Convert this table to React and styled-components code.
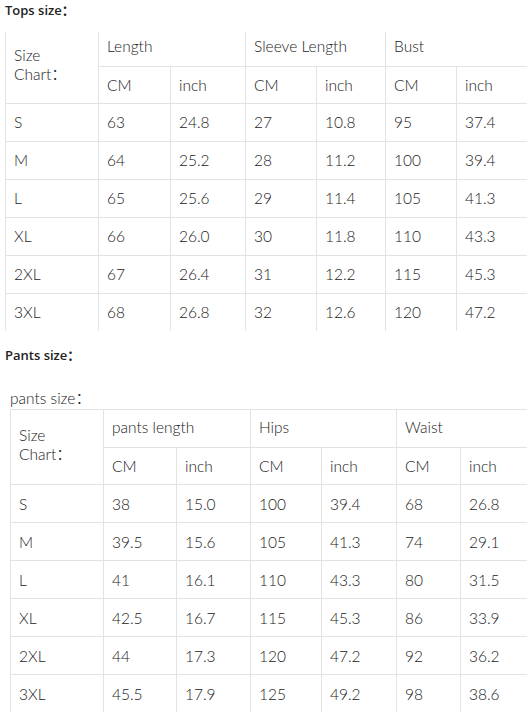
import React from "react";
import styled, { createGlobalStyle } from "styled-components";

const GlobalStyle = createGlobalStyle`
   html, body {
      margin: 0;
      padding: 0;
      background: #fff;
      overflow: hidden;
   }
   body {
      font-family: Lato, "Noto Sans CJK SC", "Liberation Sans", sans-serif;
   }
`;

const Page = styled.div`
   width: 527px;
   height: 712px;
   overflow: hidden;
   padding-left: 5px;
   box-sizing: border-box;
`;

const Heading = styled.div`
   font-family: "Open Sans", "Noto Sans CJK SC", "Liberation Sans", sans-serif;
   font-weight: 600;
   font-size: 13px;
   line-height: 18px;
   color: #222;
   padding-top: 1px;
   margin-top: ${(props) => props.$top || 0}px;
   margin-bottom: ${(props) => props.$gap || 0}px;
`;

const Sub = styled.div`
   padding-left: 5px;
`;

const Caption = styled.div`
   font-size: 15.5px;
   font-weight: 300;
   line-height: 20px;
   color: #222;
   margin-bottom: 1px;
`;

const Table = styled.table`
   border-collapse: collapse;
   table-layout: fixed;
   width: ${(props) => props.$width}px;
   color: #222;
   font-size: 15.5px;
   font-weight: 300;
   border-left: 1px solid #e3e3e3;
   ${(props) =>
      props.$boxed
         ? "border-top: 1px solid #e3e3e3; border-bottom: 1px solid #e3e3e3;"
         : ""}
`;

const Row = styled.tr`
   height: ${(props) => props.$h || 38}px;
`;

const Cell = styled.td`
   border: 1px solid #e3e3e3;
   padding: 0 0 0 8px;
   vertical-align: middle;
   line-height: 20px;
   white-space: nowrap;
   text-align: left;
`;

const EdgeCell = styled(Cell)`
   border-top: ${(props) => (props.$open ? "none" : "1px solid #e3e3e3")};
   vertical-align: top;
   padding-top: ${(props) => props.$pt || 4}px;
   line-height: ${(props) => props.$lh || 20}px;
`;

const LastRow = styled(Row)`
   & > td {
      border-bottom: ${(props) => (props.$open ? "none" : "1px solid #e3e3e3")};
   }
`;

const tops = [
   ["S", "63", "24.8", "27", "10.8", "95", "37.4"],
   ["M", "64", "25.2", "28", "11.2", "100", "39.4"],
   ["L", "65", "25.6", "29", "11.4", "105", "41.3"],
   ["XL", "66", "26.0", "30", "11.8", "110", "43.3"],
   ["2XL", "67", "26.4", "31", "12.2", "115", "45.3"],
   ["3XL", "68", "26.8", "32", "12.6", "120", "47.2"],
];

const pants = [
   ["S", "38", "15.0", "100", "39.4", "68", "26.8"],
   ["M", "39.5", "15.6", "105", "41.3", "74", "29.1"],
   ["L", "41", "16.1", "110", "43.3", "80", "31.5"],
   ["XL", "42.5", "16.7", "115", "45.3", "86", "33.9"],
   ["2XL", "44", "17.3", "120", "47.2", "92", "36.2"],
   ["3XL", "45.5", "17.9", "125", "49.2", "98", "38.6"],
];

const SizeTable = ({ cols, groups, rows, boxed, h1, h2, sizeTop, groupTop }) => {
   const width = cols.reduce((a, b) => a + b, 0);
   const open = !boxed;
   return (
      <Table $width={width} $boxed={boxed}>
         <colgroup>
            {cols.map((c, i) => (
               <col key={i} style={{ width: c }} />
            ))}
         </colgroup>
         <tbody>
            <Row $h={h1}>
               <EdgeCell rowSpan={2} $open={open} $pt={sizeTop} $lh={19}>
                  Size
                  <br />
                  Chart：
               </EdgeCell>
               {groups.map((g) => (
                  <EdgeCell key={g} colSpan={2} $open={open} $pt={groupTop}>
                     {g}
                  </EdgeCell>
               ))}
            </Row>
            <Row $h={h2}>
               {groups.map((g) => (
                  <React.Fragment key={g}>
                     <Cell>CM</Cell>
                     <Cell>inch</Cell>
                  </React.Fragment>
               ))}
            </Row>
            {rows.map((r, idx) => {
               const R = idx === rows.length - 1 ? LastRow : Row;
               return (
                  <R key={r[0]} $open={open}>
                     {r.map((v, i) => (
                        <Cell key={i}>{v}</Cell>
                     ))}
                  </R>
               );
            })}
         </tbody>
      </Table>
   );
};

export default function App() {
   return (
      <>
         <GlobalStyle />
         <Page>
            <Heading $gap={13}>Tops size：</Heading>
            <SizeTable
               cols={[93, 72, 75, 71, 69, 71, 72]}
               groups={["Length", "Sleeve Length", "Bust"]}
               rows={tops}
               h1={34}
               h2={37}
               sizeTop={14}
               groupTop={4}
            />
            <Heading $top={14} $gap={24}>
               Pants size：
            </Heading>
            <Sub>
               <Caption>pants size：</Caption>
               <SizeTable
                  cols={[93, 73, 74, 71, 75, 64, 72]}
                  groups={["pants length", "Hips", "Waist"]}
                  rows={pants}
                  boxed
                  h1={38}
                  h2={37}
                  sizeTop={16}
                  groupTop={7}
               />
            </Sub>
         </Page>
      </>
   );
}
